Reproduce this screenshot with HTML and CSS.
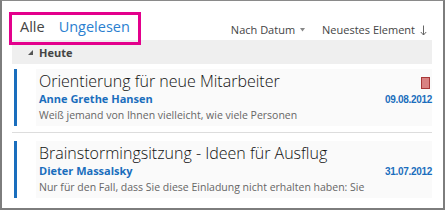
FILE: index.html
```html
<!DOCTYPE html>
<html lang="de">
<head>
<meta charset="utf-8">
<title>Posteingang</title>
<link rel="stylesheet" href="styles.css">
</head>
<body>
<div class="frame">
  <div class="toolbar">
    <div class="tabs">
      <span class="tab tab-all">Alle</span>
      <span class="tab tab-unread">Ungelesen</span>
    </div>
    <div class="sorts">
      <span class="sort">Nach Datum <svg class="sort-caret" width="5" height="4" viewBox="0 0 5 4"><polygon points="0,0 5,0 2.5,3.5" fill="#888"/></svg></span>
      <span class="sort">Neuestes Element <svg class="sort-arrow" width="7" height="11" viewBox="0 0 7 11"><path d="M3.5 0.5 V10 M0.8 7 L3.5 10 L6.2 7" fill="none" stroke="#666" stroke-width="1"/></svg></span>
    </div>
    <div class="highlight"></div>
  </div>
  <div class="group">
    <svg class="group-caret" width="5" height="5" viewBox="0 0 5 5"><polygon points="5,0 5,5 0,5" fill="#555"/></svg>
    <span class="group-title">Heute</span>
  </div>
  <div class="list">
    <div class="msg">
      <div class="bar"></div>
      <div class="body">
        <div class="row">
          <span class="subject">Orientierung für neue Mitarbeiter</span>
          <span class="flag"></span>
        </div>
        <div class="row">
          <span class="sender">Anne Grethe Hansen</span>
          <span class="date">09.08.2012</span>
        </div>
        <div class="preview">Weiß jemand von Ihnen vielleicht, wie viele Personen</div>
      </div>
    </div>
    <div class="msg">
      <div class="bar"></div>
      <div class="body">
        <div class="row">
          <span class="subject">Brainstormingsitzung - Ideen für Ausflug</span>
        </div>
        <div class="row">
          <span class="sender">Dieter Massalsky</span>
          <span class="date">31.07.2012</span>
        </div>
        <div class="preview">Nur für den Fall, dass Sie diese Einladung nicht erhalten haben: Sie</div>
      </div>
    </div>
  </div>
</div>
</body>
</html>
```

FILE: styles.css
```css
html, body {
  margin: 0;
  padding: 0;
  background: #ffffff;
}

.frame {
  box-sizing: border-box;
  width: 445px;
  height: 210px;
  border-top: 1px solid #8a8a8a;
  border-left: 2px solid #7d7d7d;
  border-right: 2px solid #7d7d7d;
  border-bottom: 2px solid #7d7d7d;
  font-family: "Open Sans", "Noto Sans", sans-serif;
  overflow: hidden;
}

.toolbar {
  position: relative;
  height: 39px;
  display: flex;
  align-items: flex-end;
  justify-content: space-between;
}

.tabs {
  display: flex;
  gap: 14px;
  padding-left: 18px;
  padding-bottom: 3px;
}

.tab {
  font-size: 14.5px;
  line-height: 20px;
}

.tab-all {
  color: #444444;
}

.tab-unread {
  color: #2b7fd0;
}

.sorts {
  display: flex;
  gap: 17px;
  padding-right: 16px;
  padding-bottom: 3px;
}

.sort {
  font-size: 11px;
  line-height: 14px;
  color: #444444;
  display: inline-flex;
  align-items: center;
  gap: 5px;
}

.highlight {
  position: absolute;
  left: 7px;
  top: 11px;
  width: 126px;
  height: 27px;
  border: 3px solid #e3008c;
}

.group {
  margin: 0 11px 0 10px;
  height: 24px;
  background: #efefef;
  display: flex;
  align-items: center;
  gap: 6px;
  padding-left: 16px;
}

.group-title {
  font-size: 11px;
  font-weight: 700;
  color: #444444;
}

.list {
  margin: 0 11px 0 10px;
}

.msg {
  display: flex;
  gap: 19px;
  padding: 5px 0 6px 2px;
  border-bottom: 1px solid #dddddd;
}

.msg + .msg {
  border-bottom: none;
  padding-top: 8px;
}

.bar {
  width: 3px;
  background: #1a6ebd;
  flex: none;
}

.body {
  flex: 1;
  background: #fafafa;
  padding: 1px 0 2px 3px;
}

.row {
  display: flex;
  justify-content: space-between;
  align-items: center;
}

.subject {
  font-size: 16px;
  font-weight: 300;
  line-height: 22px;
  color: #111111;
}

.flag {
  width: 7px;
  height: 10px;
  background: #d98282;
  border: 1px solid #a83838;
  margin: 3px 2px 0 0;
}

.sender {
  font-size: 11px;
  font-weight: 700;
  color: #1a6ebd;
  line-height: 14px;
}

.date {
  font-family: "Liberation Sans", Arial, sans-serif;
  font-size: 10px;
  font-weight: 700;
  color: #1a6ebd;
  letter-spacing: -0.3px;
}

.preview {
  font-size: 10.5px;
  line-height: 18px;
  color: #666666;
}
```
